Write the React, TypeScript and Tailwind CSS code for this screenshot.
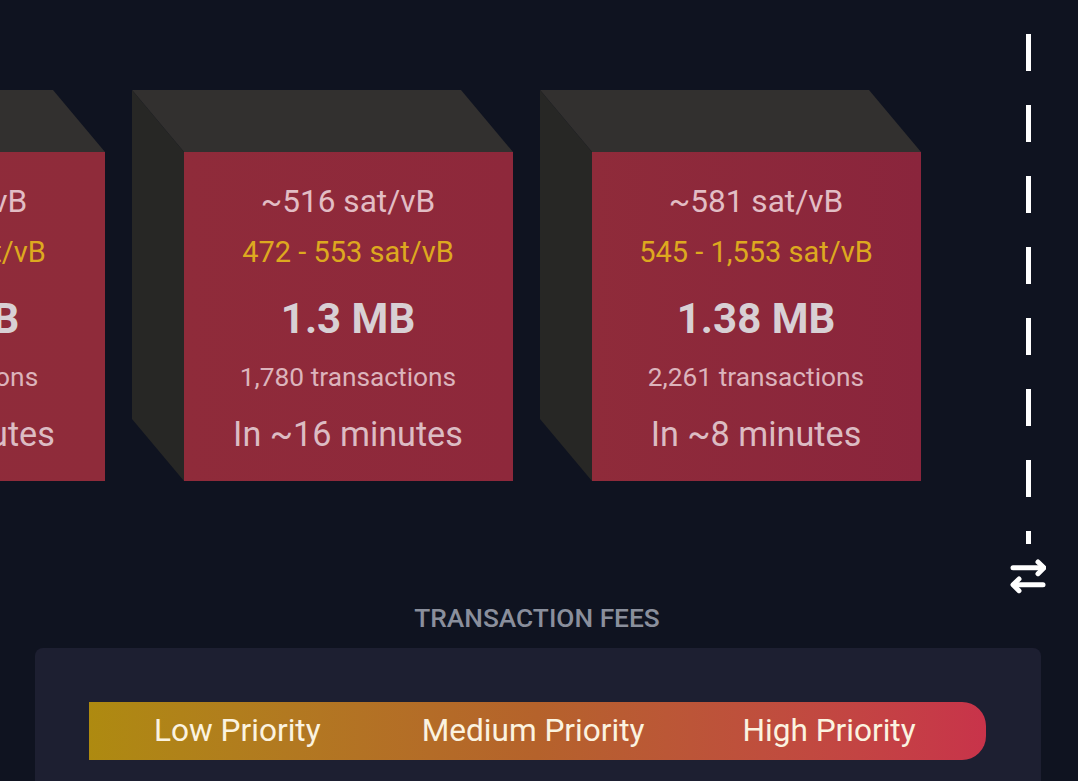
const blocks = [
  { fee: "~455 sat/vB", range: "415 - 472 sat/vB", size: "1.38 MB", count: "982 transactions", eta: "In ~24 minutes", from: "#8f2c3a", to: "#8f2b3a" },
  { fee: "~516 sat/vB", range: "472 - 553 sat/vB", size: "1.3 MB", count: "1,780 transactions", eta: "In ~16 minutes", from: "#8f2b3a", to: "#8e283b" },
  { fee: "~581 sat/vB", range: "545 - 1,553 sat/vB", size: "1.38 MB", count: "2,261 transactions", eta: "In ~8 minutes", from: "#8f2b3a", to: "#8a253c" },
];

function Block({ b }: { b: (typeof blocks)[number] }) {
  return (
    <div className="relative w-[381px] h-[391px] shrink-0 pl-[52px] pt-[62px]">
      <svg className="absolute left-0 top-0" width="381" height="391" viewBox="0 0 381 391">
        <polygon points="0,0 329,0 381,62 52,62" fill="#32302f" />
        <polygon points="0,0 52,62 52,391 0,329" fill="#272725" />
      </svg>
      <div
        className="relative w-[329px] h-[329px] flex flex-col items-center text-center whitespace-nowrap"
        style={{ background: `linear-gradient(to right, ${b.from}, ${b.to})` }}
      >
        <div className="mt-[31px] h-[38px] leading-[38px] text-[31.6px] text-[#e2bdc4]">{b.fee}</div>
        <div className="mt-[12px] h-[38px] leading-[38px] text-[29px] text-[#dda91f]">{b.range}</div>
        <div className="mt-[21px] h-[54px] leading-[54px] text-[42px] font-bold text-[#d8d0d4]">{b.size}</div>
        <div className="mt-[14px] h-[34px] leading-[34px] text-[26.3px] text-[#dcb4bc]">{b.count}</div>
        <div className="mt-[17px] h-[46px] leading-[46px] text-[34.2px] text-[#dcbcc3]">{b.eta}</div>
      </div>
    </div>
  );
}

function Swap() {
  return (
    <svg width="36" height="36" viewBox="0 0 36 36" fill="none" stroke="#ffffff" strokeWidth="5" strokeLinecap="round" strokeLinejoin="round">
      <path d="M3 9.7h30" />
      <path d="M28 4l6 5.7-6 6" />
      <path d="M33 26.7H4" />
      <path d="M9 21l-6 5.7 6 6" />
    </svg>
  );
}

export default function App() {
  return (
    <div className="w-[1078px] h-[781px] overflow-hidden bg-[#0f1320] font-['Roboto',sans-serif]">
      <div className="flex items-start h-[601px] -ml-[276.5px]">
        <div className="flex gap-[27px] mt-[90px]">
          {blocks.map((b) => (
            <Block key={b.fee} b={b} />
          ))}
        </div>
        <div className="flex flex-col items-center ml-[72.5px] w-[70px] mt-[34px]">
          {[0, 1, 2, 3, 4, 5, 6].map((i) => (
            <div key={i} className="w-[5px] h-[37px] mb-[34px] bg-white" />
          ))}
          <div className="w-[5px] h-[13px] bg-white" />
          <div className="mt-[14px]">
            <Swap />
          </div>
        </div>
      </div>
      <div className="h-[47px] pt-[2px] pr-[4px] text-center text-[26.3px] leading-[30px] font-medium text-[#8a8f9c]">
        TRANSACTION FEES
      </div>
      <div className="mx-[35px] w-[1006px] h-[200px] rounded-t-lg bg-[#1d1f31] pl-[54px] pr-[55px] pt-[54px]">
        <div className="h-[58px] rounded-r-[24px] bg-gradient-to-r from-[#ae8a10] via-[#b5622b] via-50% to-[#c8334a] flex items-center text-[31.6px] text-[#fbf3e0] whitespace-nowrap">
          <span className="ml-[65px]">Low Priority</span>
          <span className="ml-[101px]">Medium Priority</span>
          <span className="ml-[98px]">High Priority</span>
        </div>
      </div>
    </div>
  );
}
